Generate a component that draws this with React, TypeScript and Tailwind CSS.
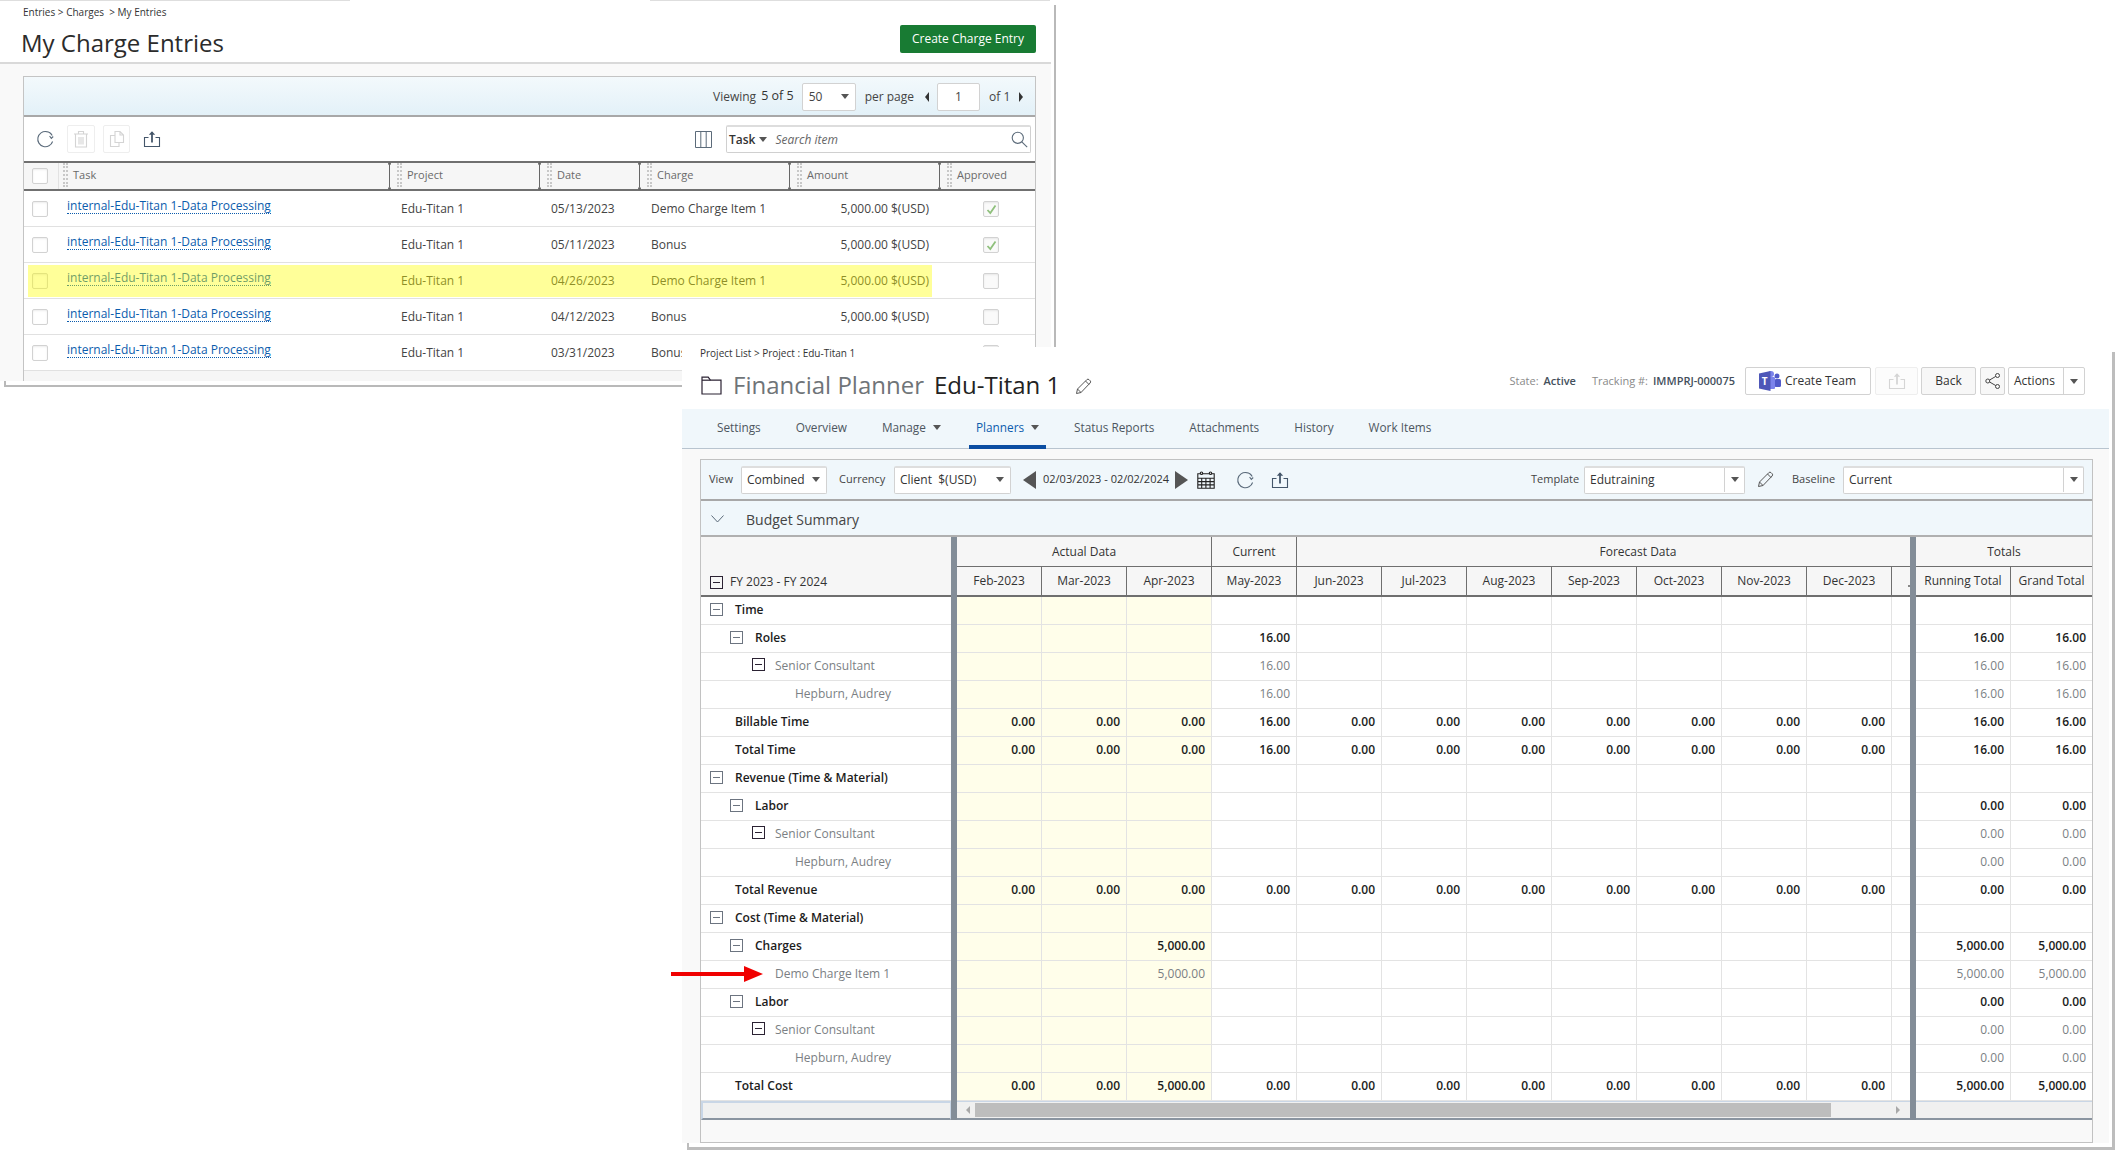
import React from 'react';

const months = ['Feb-2023', 'Mar-2023', 'Apr-2023', 'May-2023', 'Jun-2023', 'Jul-2023', 'Aug-2023', 'Sep-2023', 'Oct-2023', 'Nov-2023', 'Dec-2023'];

const none = ['', '', '', '', '', '', '', '', '', '', ''];
const zeros = ['0.00', '0.00', '0.00', '0.00', '0.00', '0.00', '0.00', '0.00', '0.00', '0.00', '0.00'];
const may16 = ['', '', '', '16.00', '', '', '', '', '', '', ''];
const timeTotals = ['0.00', '0.00', '0.00', '16.00', '0.00', '0.00', '0.00', '0.00', '0.00', '0.00', '0.00'];
const apr5k = ['', '', '5,000.00', '', '', '', '', '', '', '', ''];
const costTotals = ['0.00', '0.00', '5,000.00', '0.00', '0.00', '0.00', '0.00', '0.00', '0.00', '0.00', '0.00'];

type Row = { label: string; pad: string; icon?: 'soft' | 'dark'; muted?: boolean; cells: string[]; totals: string[] };

const rows: Row[] = [
  { label: 'Time', pad: 'pl-[9px]', icon: 'soft', cells: none, totals: ['', ''] },
  { label: 'Roles', pad: 'pl-[29px]', icon: 'soft', cells: may16, totals: ['16.00', '16.00'] },
  { label: 'Senior Consultant', pad: 'pl-[51px]', icon: 'dark', muted: true, cells: may16, totals: ['16.00', '16.00'] },
  { label: 'Hepburn, Audrey', pad: 'pl-[94px]', muted: true, cells: may16, totals: ['16.00', '16.00'] },
  { label: 'Billable Time', pad: 'pl-[34px]', cells: timeTotals, totals: ['16.00', '16.00'] },
  { label: 'Total Time', pad: 'pl-[34px]', cells: timeTotals, totals: ['16.00', '16.00'] },
  { label: 'Revenue (Time & Material)', pad: 'pl-[9px]', icon: 'soft', cells: none, totals: ['', ''] },
  { label: 'Labor', pad: 'pl-[29px]', icon: 'soft', cells: none, totals: ['0.00', '0.00'] },
  { label: 'Senior Consultant', pad: 'pl-[51px]', icon: 'dark', muted: true, cells: none, totals: ['0.00', '0.00'] },
  { label: 'Hepburn, Audrey', pad: 'pl-[94px]', muted: true, cells: none, totals: ['0.00', '0.00'] },
  { label: 'Total Revenue', pad: 'pl-[34px]', cells: zeros, totals: ['0.00', '0.00'] },
  { label: 'Cost (Time & Material)', pad: 'pl-[9px]', icon: 'soft', cells: none, totals: ['', ''] },
  { label: 'Charges', pad: 'pl-[29px]', icon: 'soft', cells: apr5k, totals: ['5,000.00', '5,000.00'] },
  { label: 'Demo Charge Item 1', pad: 'pl-[74px]', muted: true, cells: apr5k, totals: ['5,000.00', '5,000.00'] },
  { label: 'Labor', pad: 'pl-[29px]', icon: 'soft', cells: none, totals: ['0.00', '0.00'] },
  { label: 'Senior Consultant', pad: 'pl-[51px]', icon: 'dark', muted: true, cells: none, totals: ['0.00', '0.00'] },
  { label: 'Hepburn, Audrey', pad: 'pl-[94px]', muted: true, cells: none, totals: ['0.00', '0.00'] },
  { label: 'Total Cost', pad: 'pl-[34px]', cells: costTotals, totals: ['5,000.00', '5,000.00'] },
];

// last row sits under the planner window, its amount is not visible
const entries = [
  { date: '05/13/2023', charge: 'Demo Charge Item 1', amount: '5,000.00 $(USD)', approved: true },
  { date: '05/11/2023', charge: 'Bonus', amount: '5,000.00 $(USD)', approved: true },
  { date: '04/26/2023', charge: 'Demo Charge Item 1', amount: '5,000.00 $(USD)', approved: false },
  { date: '04/12/2023', charge: 'Bonus', amount: '5,000.00 $(USD)', approved: false },
  { date: '03/31/2023', charge: 'Bonus', amount: '', approved: false },
];

const entryCols = 'grid grid-cols-[35px_330px_150px_100px_150px_150px_1fr]';
const plannerCols = 'grid grid-cols-[250px_6px_repeat(11,85px)_18px_6px_95px_1fr]';

function Caret({ className = '' }: { className?: string }) {
  return <span className={`inline-block h-0 w-0 border-x-[4px] border-t-[5px] border-x-transparent border-t-[#555] ${className}`} />;
}

function Refresh({ color = '#5b6b7b' }: { color?: string }) {
  return (
    <svg width="20" height="20" viewBox="0 0 20 20" fill="none" stroke={color} strokeWidth="1.1">
      <path d="M16.6 12.5A7.6 7.6 0 1 1 10.5 2.6c2.6.2 4.6 1.8 5.7 4" />
      <path d="M17.2 7.5l-1.9 1.9-1.7-2.4" />
    </svg>
  );
}

function Upload({ color = '#44566a', size = 18 }: { color?: string; size?: number }) {
  return (
    <svg width={size} height={size} viewBox="0 0 18 18" fill="none" stroke={color} strokeWidth="1.1">
      <path d="M5.5 7.5H1.5v9h15v-9h-4" />
      <path d="M9 12.5V2" strokeWidth="1.8" />
      <path d="M5.8 4.8L9 1.2l3.2 3.6z" fill={color} stroke="none" />
    </svg>
  );
}

function Pencil() {
  return (
    <svg width="17" height="17" viewBox="0 0 17 17" fill="none" stroke="#555" strokeWidth="1">
      <path d="M1.5 15.5l1-4.5L11.8 1.7a1.6 1.6 0 0 1 2.3 0l1 1a1.6 1.6 0 0 1 0 2.3L6 14.5z" />
      <path d="M2.5 11l3.5 3.5M10.5 3l3.5 3.5" />
    </svg>
  );
}

function Folder() {
  return (
    <svg width="21" height="20" viewBox="0 0 21 20" fill="none" stroke="#2b2233" strokeWidth="1.2">
      <path d="M1 19V2.2h6.2l2.2 3H20V19z" />
      <path d="M1 5.2h8.4" />
    </svg>
  );
}

function Box({ checked, dim }: { checked?: boolean; dim?: boolean }) {
  return (
    <span className={`flex h-[16px] w-[16px] items-center justify-center rounded-[2px] border border-[#d2d2d2] ${dim ? 'bg-[#fafafa]' : 'bg-white'} shadow-[inset_0_1px_2px_rgba(0,0,0,0.08)]`}>
      {checked && (
        <svg width="11" height="11" viewBox="0 0 11 11" fill="none" stroke="#8fc07c" strokeWidth="1.8">
          <path d="M1.5 6l2.8 3L9.5 1.5" />
        </svg>
      )}
    </span>
  );
}

function HeadCell({ label, first }: { label: string; first?: boolean }) {
  return (
    <div className={`relative flex items-center pb-[2px] text-[11px] text-[#6a6a6a] ${first ? 'pl-[4px]' : 'pl-[8px]'}`}>
      {!first && (
        <span className="absolute -left-px -top-px -bottom-px flex w-[3px] flex-col items-center justify-between">
          <span className="h-[3px] w-[3px] rounded-full bg-[#666]" />
          <span className="w-px flex-1 bg-[#666]" />
          <span className="h-[3px] w-[3px] rounded-full bg-[#666]" />
        </span>
      )}
      <span className="mr-[5px] h-[24px] w-[5px] shrink-0 border-x-2 border-dotted border-[#c8c8c8]" />
      <span>{label}</span>
    </div>
  );
}

function ChargeEntries() {
  return (
    <div className="absolute left-0 top-0 h-[387px] w-[1056px]">
      <span className="absolute left-0 top-0 h-px w-[350px] bg-[#dedede]" />
      <span className="absolute left-[650px] top-0 h-px w-[400px] bg-[#dedede]" />
      <span className="absolute right-0 top-[5px] h-[382px] w-[2px] bg-[#b9b9b9]" />
      <span className="absolute bottom-0 left-[4px] h-[6px] w-[1052px] border-b-2 border-l-2 border-[#b9b9b9]" />
      <div className="flex h-[381px] w-[1051px] flex-col bg-[#f9f9f9]">
        <div className="flex h-[64px] shrink-0 justify-between border-b-2 border-[#d9d9d9] bg-white pl-[21px] pr-[15px]">
          <div>
            <p className="mt-[5px] pl-[2px] text-[10px] leading-[14px] text-[#333]">Entries &gt; Charges &nbsp;&gt; My Entries</p>
            <h1 className="mt-[8px] text-[24px] leading-[32px] text-[#2b2b2b]">My Charge Entries</h1>
          </div>
          <button className="mt-[25px] h-[28px] w-[136px] rounded-[2px] bg-[#187b33] text-[12px] text-white">Create Charge Entry</button>
        </div>
        <div className="relative ml-[23px] mt-[12px] flex w-[1013px] flex-1 flex-col border-x border-t border-[#c4c4c4] bg-white">
          <div className="flex h-[40px] shrink-0 items-center border-b-2 border-[#a8a8a8] bg-gradient-to-b from-[#f3f9fc] to-[#e3f1f8] pl-[689px] pt-[1px] text-[12px] text-[#444]">
            <span>Viewing</span>
            <span className="ml-[5px] text-[12.5px] text-[#333]">5 of 5</span>
            <div className="ml-[8px] flex h-[28px] w-[54px] items-center justify-between rounded-[2px] border border-[#d2d2d2] bg-white px-[6px]">
              <span>50</span>
              <Caret />
            </div>
            <span className="ml-[9px]">per page</span>
            <span className="ml-[11px] h-0 w-0 border-y-[5px] border-r-[4px] border-y-transparent border-r-[#333]" />
            <div className="ml-[8px] flex h-[28px] w-[43px] items-center justify-center rounded-[2px] border border-[#d2d2d2] bg-white">1</div>
            <span className="ml-[9px]">of 1</span>
            <span className="ml-[9px] h-0 w-0 border-y-[5px] border-l-[4px] border-y-transparent border-l-[#333]" />
          </div>
          <div className="flex h-[44px] shrink-0 items-center pl-[12px]">
            <Refresh />
            <div className="ml-[11px] flex h-[28px] w-[28px] items-center justify-center rounded-[2px] border border-[#eeeeee]">
              <svg width="16" height="18" viewBox="0 0 16 18" fill="none" stroke="#d4d4d4" strokeWidth="1.1">
                <path d="M1 4h14M5.5 4V1.5h5V4M2.5 4v13h11V4M6 7v7.5M8 7v7.5M10 7v7.5" />
              </svg>
            </div>
            <div className="ml-[8px] flex h-[28px] w-[27px] items-center justify-center rounded-[2px] border border-[#eeeeee]">
              <svg width="16" height="18" viewBox="0 0 16 18" fill="none" stroke="#d4d4d4" strokeWidth="1.1">
                <path d="M6 1.5h5l3.5 3.5v7.5H6zM11 1.5V5h3.5M6 5.5H1.5v11H10v-4" />
              </svg>
            </div>
            <span className="ml-[13px]"><Upload /></span>
            <svg className="ml-[534px]" width="17" height="17" viewBox="0 0 17 17" fill="none" stroke="#5c6b7a" strokeWidth="1">
              <path d="M.5.5h16v16H.5zM5.8.5v16M11.2.5v16" />
            </svg>
            <div className="ml-[14px] flex h-[28px] w-[305px] items-center rounded-[2px] border border-[#d0d0d0] border-t-2 border-t-[#dddddd] px-[2px]">
              <span className="text-[12px] font-semibold text-[#333]">Task</span>
              <Caret className="ml-[4px]" />
              <span className="ml-[8px] flex-1 text-[12px] italic text-[#666]">Search item</span>
              <svg width="17" height="17" viewBox="0 0 17 17" fill="none" stroke="#5c6b7a" strokeWidth="1.1">
                <circle cx="6.8" cy="6.8" r="5.6" />
                <path d="M10.8 10.8l5.4 5.4" />
              </svg>
            </div>
          </div>
          <div className={`${entryCols} h-[30px] shrink-0 border-y-2 border-[#707070] bg-[#f6f6f6]`}>
            <div className="flex items-center border-r border-[#e2e2e2] pl-[8px]"><Box /></div>
            <HeadCell label="Task" first />
            <HeadCell label="Project" />
            <HeadCell label="Date" />
            <HeadCell label="Charge" />
            <HeadCell label="Amount" />
            <HeadCell label="Approved" />
          </div>
          {entries.map((e, i) => (
            <div key={i} className={`${entryCols} h-[36px] shrink-0 border-b border-[#e1e1e1] text-[12px] text-[#444]`}>
              <div className="flex items-center pl-[8px] pt-[1px]"><Box /></div>
              <div className="flex items-center pl-[8px]">
                <span className="mb-[6px] border-b border-dotted border-[#0b5cad] leading-[15px] text-[#0b5cad]">internal-Edu-Titan 1-Data Processing</span>
              </div>
              <div className="flex items-center pl-[12px]">Edu-Titan 1</div>
              <div className="flex items-center pl-[12px]">{e.date}</div>
              <div className="flex items-center pl-[12px]">{e.charge}</div>
              <div className="flex items-center justify-end pr-[10px]">{e.amount}</div>
              <div className="flex items-center pl-[44px] pt-[1px]"><Box checked={e.approved} dim /></div>
            </div>
          ))}
          <div className="flex-1 bg-[#f6f6f6]" />
          <span className="absolute left-[4px] top-[188px] h-[32px] w-[904px] bg-[#ffff00]/40" />
        </div>
      </div>
    </div>
  );
}

function Select({ label, width, split }: { label: string; width: string; split?: boolean }) {
  return (
    <div className={`flex h-[28px] ${width} shrink-0 items-center rounded-[2px] border border-[#d2d2d2] border-t-2 border-t-[#dedede] bg-white pb-[1px] pl-[5px] text-[12px] text-[#333]`}>
      <span className="flex-1 whitespace-pre">{label}</span>
      <span className={`flex h-full w-[20px] items-center justify-center ${split ? 'border-l border-[#d2d2d2]' : ''}`}>
        <Caret />
      </span>
    </div>
  );
}

function Minus({ tone }: { tone: 'soft' | 'dark' }) {
  return (
    <span className={`relative h-[13px] w-[13px] shrink-0 border ${tone === 'dark' ? '-mt-[3px] border-[#2b2233]' : 'border-[#6c7480]'}`}>
      <span className={`absolute left-[2px] top-[5px] h-px w-[7px] ${tone === 'dark' ? 'bg-[#2b2233]' : 'bg-[#6c7480]'}`} />
    </span>
  );
}

function Planner() {
  return (
    <div className="absolute left-[682px] top-[347px] h-[803px] w-[1433px] bg-white">
      <span className="absolute right-0 top-[5px] h-[798px] w-[3px] bg-[#bdbdbd]" />
      <span className="absolute bottom-0 left-[5px] h-[7px] w-[1428px] border-b-[3px] border-l-2 border-[#bdbdbd]" />
      <div className="flex h-[796px] w-[1427px] flex-col bg-[#f9f9f9]">
        <div className="bg-white">
          <p className="h-[14px] pl-[18px] text-[10px] leading-[12px] text-[#333]">Project List &gt; Project : Edu-Titan 1</p>
          <div className="flex h-[48px] justify-between pl-[19px] pr-[24px]">
            <div className="flex items-center">
              <Folder />
              <span className="ml-[11px] text-[24px] text-[#6f7478]">Financial Planner</span>
              <span className="ml-[10px] text-[24px] text-[#222]">Edu-Titan 1</span>
              <span className="ml-[15px] mt-[2px]"><Pencil /></span>
            </div>
            <div className="mt-[6px] flex h-[28px] items-center text-[11px]">
              <span className="text-[#8a8a8a]">State:</span>
              <span className="ml-[5px] font-semibold text-[#44505c]">Active</span>
              <span className="ml-[16px] text-[#8a8a8a]">Tracking #:</span>
              <span className="ml-[5px] font-semibold text-[#44505c]">IMMPRJ-000075</span>
              <button className="ml-[10px] flex h-[28px] w-[126px] items-center rounded-[2px] border border-[#d2d2d2] bg-white pl-[12px] text-[12px] text-[#333]">
                <svg width="24" height="24" viewBox="0 0 24 24">
                  <circle cx="19" cy="7" r="2.5" fill="#5059c9" />
                  <rect x="16.5" y="10" width="6.5" height="8" rx="1.5" fill="#5059c9" />
                  <circle cx="13" cy="5" r="3" fill="#7b83eb" />
                  <rect x="9" y="8" width="8" height="12" rx="1" fill="#7b83eb" />
                  <path d="M1 4.5L12.5 2v20L1 19.5z" fill="#4e57b8" />
                  <text x="6.7" y="15.5" textAnchor="middle" fontSize="10" fontWeight="700" fill="#fff" fontFamily="Open Sans, sans-serif">T</text>
                </svg>
                <span className="ml-[3px]">Create Team</span>
              </button>
              <div className="ml-[4px] flex h-[28px] w-[43px] items-center justify-center rounded-[2px] border border-[#eeeeee] bg-[#fcfcfc]">
                <Upload color="#d5d5d5" />
              </div>
              <button className="ml-[3px] h-[28px] w-[55px] rounded-[2px] border border-[#d2d2d2] bg-[#f7f7f7] text-[12px] text-[#333]">Back</button>
              <div className="ml-[4px] flex h-[28px] w-[25px] items-center justify-center rounded-[2px] border border-[#d2d2d2] bg-[#f7f7f7]">
                <svg width="16" height="18" viewBox="0 0 16 18" fill="none" stroke="#444" strokeWidth="1">
                  <circle cx="12.5" cy="3.5" r="2" />
                  <circle cx="2.8" cy="9" r="2" />
                  <circle cx="12.5" cy="14.5" r="2" />
                  <path d="M4.6 8l6.2-3.6M4.6 10l6.2 3.6" />
                </svg>
              </div>
              <div className="ml-[3px] flex h-[28px] w-[77px] items-center rounded-[2px] border border-[#d2d2d2] bg-white text-[12px] text-[#333]">
                <span className="flex-1 pl-[5px]">Actions</span>
                <span className="flex h-full w-[21px] items-center justify-center border-l border-[#d2d2d2]"><Caret /></span>
              </div>
            </div>
          </div>
        </div>

        <div className="flex h-[40px] shrink-0 items-center gap-[21px] border-b border-[#b8c4cf] bg-[#f0f7fb] pl-[28px] text-[11.8px] text-[#4d5660]">
          <span className="mb-[2px] px-[7px]">Settings</span>
          <span className="mb-[2px] px-[7px]">Overview</span>
          <span className="mb-[2px] flex items-center px-[7px]">Manage<Caret className="ml-[7px]" /></span>
          <span className="relative flex h-full items-center px-[7px] pb-[2px] font-medium text-[#0b5cad]">
            Planners<Caret className="ml-[7px] border-t-[#0b5cad]" />
            <span className="absolute inset-x-0 -bottom-px h-[4px] bg-[#0b4ea2]" />
          </span>
          <span className="mb-[2px] px-[7px]">Status Reports</span>
          <span className="mb-[2px] px-[7px]">Attachments</span>
          <span className="mb-[2px] px-[7px]">History</span>
          <span className="mb-[2px] px-[7px]">Work Items</span>
        </div>

        <div className="ml-[18px] mt-[10px] flex w-[1393px] flex-1 flex-col border border-[#c2c2c2]">
          <div className="flex h-[41px] shrink-0 items-center border-b-2 border-[#a8a8a8] bg-[#f0f7fb] text-[11px] text-[#444]">
            <span className="ml-[8px] w-[32px]">View</span>
            <Select label="Combined" width="w-[86px]" />
            <span className="ml-[12px] w-[55px]">Currency</span>
            <Select label="Client  $(USD)" width="w-[117px]" />
            <span className="ml-[12px] h-0 w-0 border-y-[9px] border-r-[13px] border-y-transparent border-r-[#555]" />
            <span className="ml-[7px] text-[11px] text-[#333]">02/03/2023 - 02/02/2024</span>
            <span className="ml-[6px] h-0 w-0 border-y-[9px] border-l-[13px] border-y-transparent border-l-[#555]" />
            <svg className="ml-[9px]" width="18" height="18" viewBox="0 0 18 18" fill="none" stroke="#222" strokeWidth="1.1">
              <path d="M.8 2.8h16.4v14.4H.8zM.8 7.3h16.4M.8 10.6h16.4M.8 13.9h16.4M4.7 7.3v9.9M8.9 7.3v9.9M13.1 7.3v9.9" />
              <circle cx="4.5" cy="2.2" r="1.2" fill="#fff" />
              <circle cx="13.5" cy="2.2" r="1.2" fill="#fff" />
            </svg>
            <span className="ml-[21px]"><Refresh /></span>
            <span className="ml-[15px]"><Upload /></span>
            <span className="ml-auto w-[53px]">Template</span>
            <Select label="Edutraining" width="w-[161px]" split />
            <span className="ml-[12px]"><Pencil /></span>
            <span className="ml-[18px] w-[51px]">Baseline</span>
            <Select label="Current" width="w-[241px]" split />
            <span className="w-[8px] shrink-0" />
          </div>
          <div className="flex h-[36px] shrink-0 items-center border-b-2 border-[#b0b0b0] bg-[#f0f7fb] pl-[10px] pt-[2px] text-[14px] text-[#444]">
            <svg width="13" height="8" viewBox="0 0 13 8" fill="none" stroke="#5c6b7a" strokeWidth="1">
              <path d="M.5.5l6 6.5 6-6.5" />
            </svg>
            <span className="ml-[22px]">Budget Summary</span>
          </div>

          <div className={`${plannerCols} shrink-0 grid-rows-[30px_30px] bg-[#f6f6f6] text-[12px] text-[#333]`}>
            <div className="row-span-2 flex items-end border-b-2 border-[#6f6f6f] pb-[6px] pl-[9px]">
              <span className="relative h-[13px] w-[13px] shrink-0 border border-[#2b2233]">
                <span className="absolute left-[2px] top-[5px] h-px w-[7px] bg-[#2b2233]" />
              </span>
              <span className="ml-[7px] leading-[14px]">FY 2023 - FY 2024</span>
            </div>
            <div className="row-span-2 bg-[#838d98]" />
            <div className="col-span-3 flex items-center justify-center border-b border-r border-[#6f6f6f]">Actual Data</div>
            <div className="flex items-center justify-center border-b border-r border-[#6f6f6f]">Current</div>
            <div className="col-span-8 flex items-center justify-center border-b border-[#6f6f6f] pl-[69px]">Forecast Data</div>
            <div className="row-span-2 bg-[#838d98]" />
            <div className="col-span-2 flex items-center justify-center border-b border-[#6f6f6f]">Totals</div>
            {months.map(m => (
              <div key={m} className="flex items-center justify-center border-b-2 border-r border-[#6f6f6f]">{m}</div>
            ))}
            {/* next month is scrolled away, only the tail of its J shows */}
            <div className="flex items-end justify-end border-b-2 border-[#6f6f6f] pb-[8px]">
              <span className="h-[2px] w-[2px] bg-[#888]" />
            </div>
            <div className="flex items-center justify-center whitespace-nowrap border-b-2 border-r border-[#6f6f6f]">Running Total</div>
            <div className="flex items-center justify-center whitespace-nowrap border-b-2 border-[#6f6f6f]">Grand Total</div>
          </div>

          {rows.map((r, i) => {
            const tone = r.muted ? 'text-[#7b7f84]' : 'font-[560] text-[#1c1c1c]';
            return (
              <div key={i} className={`${plannerCols} h-[28px] shrink-0 bg-white text-[12px] ${tone}`}>
                <div className={`flex items-center border-b border-[#e3e3e3] pb-[2px] ${r.pad}`}>
                  {r.icon && <Minus tone={r.icon} />}
                  <span className={r.icon === 'dark' ? 'ml-[10px]' : r.icon ? 'ml-[12px]' : ''}>{r.label}</span>
                </div>
                <div className="bg-[#838d98]" />
                {r.cells.map((c, j) => (
                  <div key={j} className={`flex items-center justify-end border-b border-r border-[#e3e3e3] pb-[2px] pr-[6px] ${j < 3 ? 'bg-[#fffeea]' : ''}`}>{c}</div>
                ))}
                <div className="border-b border-[#e3e3e3]" />
                <div className="bg-[#838d98]" />
                <div className="flex items-center justify-end border-b border-r border-[#e3e3e3] pb-[2px] pr-[6px]">{r.totals[0]}</div>
                <div className="flex items-center justify-end border-b border-[#e3e3e3] pb-[2px] pr-[6px]">{r.totals[1]}</div>
              </div>
            );
          })}

          <div className={`${plannerCols} h-[19px] shrink-0 bg-[#f0f0f0]`}>
            <div className="border-y-2 border-l-2 border-r border-y-[#c9d6e6] border-l-[#c9d6e6] border-r-[#c9d6e6] border-b-[#8a94a0]" />
            <div className="bg-[#838d98]" />
            <div className="col-[3/15] flex items-center border-b-2 border-t border-b-[#8a94a0] border-t-[#c9d6e6] pl-[9px]">
              <span className="h-0 w-0 border-y-[4px] border-r-[4px] border-y-transparent border-r-[#a8a8a8]" />
              <span className="ml-[5px] h-[14px] w-[856px] bg-[#bdbdbd]" />
              <span className="ml-[65px] h-0 w-0 border-y-[4px] border-l-[4px] border-y-transparent border-l-[#a8a8a8]" />
            </div>
            <div className="bg-[#838d98]" />
            <div className="col-span-2 border-b-2 border-t border-b-[#8a94a0] border-t-[#c9d6e6]" />
          </div>
          <div className="flex-1 bg-[#f9f9f9]" />
        </div>
      </div>
    </div>
  );
}

export default function App() {
  return (
    <div className="relative h-[1161px] w-[2126px] overflow-hidden bg-white font-['Open_Sans',sans-serif]">
      <ChargeEntries />
      <Planner />
      <svg className="absolute left-[671px] top-[965px]" width="93" height="18" viewBox="0 0 93 18">
        <path d="M0 7h73V1l19 8-19 8v-6H0z" fill="#f00000" />
      </svg>
    </div>
  );
}
